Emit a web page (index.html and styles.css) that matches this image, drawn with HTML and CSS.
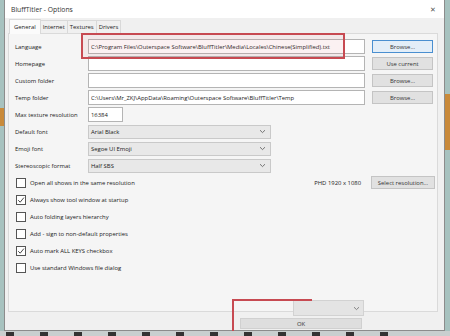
FILE: index.html
```html
<!DOCTYPE html>
<html lang="en">
<head>
    <meta charset="UTF-8">
    <title>BluffTitler - Options</title>
    <link rel="stylesheet" href="styles.css">
</head>
<body>
    <div class="wall wall-left"></div>
    <div class="wall wall-right"></div>

    <div class="window">
        <div class="titlebar">
            <span class="title">BluffTitler - Options</span>
            <span class="close">&#x2715;</span>
        </div>

        <div class="tabs">
            <span class="tab active">General</span>
            <span class="tab">Internet</span>
            <span class="tab">Textures</span>
            <span class="tab">Drivers</span>
        </div>

        <div class="panel">
            <!-- Paths -->
            <div class="row">
                <label>Language</label>
                <input class="field" type="text" value="C:\Program Files\Outerspace Software\BluffTitler\Media\Locales\Chinese(Simplified).txt">
                <button class="btn focused">Browse...</button>
            </div>
            <div class="row">
                <label>Homepage</label>
                <input class="field" type="text" value="">
                <button class="btn">Use current</button>
            </div>
            <div class="row">
                <label>Custom folder</label>
                <input class="field" type="text" value="">
                <button class="btn">Browse...</button>
            </div>
            <div class="row">
                <label>Temp folder</label>
                <input class="field" type="text" value="C:\Users\Mr_ZKJ\AppData\Roaming\Outerspace Software\BluffTitler\Temp">
                <button class="btn">Browse...</button>
            </div>
            <div class="row">
                <label>Max texture resolution</label>
                <input class="field small" type="text" value="16384">
            </div>

            <!-- Dropdowns -->
            <div class="row">
                <label>Default font</label>
                <div class="select"><span>Arial Black</span><svg width="7" height="5" viewBox="0 0 7 5"><path d="M1 1.2 L3.5 3.6 L6 1.2" fill="none" stroke="#666" stroke-width="0.9"/></svg></div>
            </div>
            <div class="row">
                <label>Emoji font</label>
                <div class="select"><span>Segoe UI Emoji</span><svg width="7" height="5" viewBox="0 0 7 5"><path d="M1 1.2 L3.5 3.6 L6 1.2" fill="none" stroke="#666" stroke-width="0.9"/></svg></div>
            </div>
            <div class="row">
                <label>Stereoscopic format</label>
                <div class="select"><span>Half SBS</span><svg width="7" height="5" viewBox="0 0 7 5"><path d="M1 1.2 L3.5 3.6 L6 1.2" fill="none" stroke="#666" stroke-width="0.9"/></svg></div>
            </div>

            <!-- Checkboxes -->
            <div class="check-row">
                <span class="box"></span>
                <span class="check-text">Open all shows in the same resolution</span>
                <span class="res">PHD 1920 x 1080</span>
                <button class="btn res-btn">Select resolution...</button>
            </div>
            <div class="check-row">
                <span class="box"><svg width="8" height="8" viewBox="0 0 8 8"><path d="M1.2 4.2 L3.2 6.2 L6.9 1.6" fill="none" stroke="#333" stroke-width="0.9"/></svg></span>
                <span class="check-text">Always show tool window at startup</span>
            </div>
            <div class="check-row">
                <span class="box"></span>
                <span class="check-text">Auto folding layers hierarchy</span>
            </div>
            <div class="check-row">
                <span class="box"></span>
                <span class="check-text">Add - sign to non-default properties</span>
            </div>
            <div class="check-row">
                <span class="box"><svg width="8" height="8" viewBox="0 0 8 8"><path d="M1.2 4.2 L3.2 6.2 L6.9 1.6" fill="none" stroke="#333" stroke-width="0.9"/></svg></span>
                <span class="check-text">Auto mark ALL KEYS checkbox</span>
            </div>
            <div class="check-row">
                <span class="box"></span>
                <span class="check-text">Use standard Windows file dialog</span>
            </div>
        </div>

        <div class="footer">
            <button class="btn ok">OK</button>
        </div>

        <div class="combo-piece"><svg width="7" height="5" viewBox="0 0 7 5"><path d="M1 1.2 L3.5 3.6 L6 1.2" fill="none" stroke="#777" stroke-width="0.9"/></svg></div>
    </div>

    <!-- red annotation boxes -->
    <div class="mark mark-top"></div>
    <div class="mark mark-bottom"></div>

    <div class="taskbar">
        <span></span><span></span><span></span><span></span><span></span><span></span><span></span><span></span><span></span><span></span><span></span><span></span>
    </div>
</body>
</html>
```

FILE: styles.css
```css
body {
    margin: 0;
    width: 450px;
    height: 336px;
    overflow: hidden;
    position: relative;
    background-color: #a7c2bf;
    font-family: 'Open Sans', 'Noto Sans', sans-serif;
    font-size: 5.9px;
    color: #1a1a1a;
}

.wall {
    position: absolute;
    background-color: #c98a3a;
}

.wall-left {
    left: 0;
    top: 108px;
    width: 4px;
    height: 18px;
}

.wall-right {
    right: 0;
    top: 94px;
    width: 5px;
    height: 56px;
}

.window {
    position: relative;
    margin-left: 4px;
    width: 439px;
    height: 330px;
    background-color: #f0f0f0;
    border: 1px solid #8c8c8c;
    border-top: none;
}

.titlebar {
    height: 18px;
    background-color: #fff;
    display: flex;
    align-items: center;
    justify-content: space-between;
    padding: 0 6px 0 6px;
}

.title {
    font-size: 6.8px;
    color: #333;
    margin-top: 1px;
}

.close {
    font-size: 7px;
    color: #555;
    margin-right: 2px;
}

.tabs {
    display: flex;
    margin: 1px 0 0 4px;
    height: 14px;
    align-items: flex-end;
    font-size: 5.9px;
}

.tab {
    height: 12px;
    line-height: 12px;
    padding: 0 2px;
    border: 1px solid #d9d9d9;
    border-bottom: none;
    background-color: #f0f0f0;
    margin-right: -1px;
}

.tab.active {
    height: 14px;
    line-height: 14px;
    background-color: #fbfbfb;
    position: relative;
    z-index: 1;
    margin-bottom: -1px;
    padding: 0 4px;
}

.panel {
    margin-left: 3px;
    width: 422px;
    height: 272px;
    border: 1px solid #dadada;
    background-color: #f5f5f5;
    padding: 5px 0 0 6px;
    display: flex;
    flex-direction: column;
    gap: 2px;
}

.row {
    display: grid;
    grid-template-columns: 66px 277px 61px;
    column-gap: 7px;
    height: 15px;
    align-items: center;
}

.row label {
    white-space: nowrap;
}

.field {
    font: inherit;
    color: #1a1a1a;
    box-sizing: border-box;
    height: 15px;
    width: 277px;
    padding: 0 2px;
    margin: 0;
    border: 1px solid #b4b4b4;
    background-color: #fff;
    outline: none;
}

.field.small {
    width: 35px;
}

.btn {
    font: inherit;
    color: #333;
    box-sizing: border-box;
    height: 13px;
    margin: 0;
    padding: 0;
    border: 1px solid #c4c4c4;
    background-color: #e1e1e1;
}

.btn.focused {
    border-color: #4a8fd0;
    background-color: #e3eef8;
}

.select {
    box-sizing: border-box;
    width: 183px;
    height: 14px;
    border: 1px solid #c9c9c9;
    background-color: #e8e8e8;
    display: flex;
    align-items: center;
    justify-content: space-between;
    padding: 0 4px 0 2px;
}

.check-row {
    height: 15px;
    display: flex;
    align-items: center;
    padding-left: 1px;
}

.box {
    box-sizing: border-box;
    width: 10px;
    height: 10px;
    border: 1px solid #555;
    background-color: #fff;
    margin-right: 4px;
    display: flex;
    align-items: center;
    justify-content: center;
}

.check-text {
    white-space: nowrap;
}

.res {
    margin-left: auto;
    margin-right: 10px;
}

.res-btn {
    width: 64px;
    margin-right: 2px;
}

.footer {
    display: flex;
    padding: 6px 0 0 235px;
}

.btn.ok {
    width: 122px;
    height: 11px;
    background-color: #dedede;
    border-color: #d0d0d0;
}

.combo-piece {
    position: absolute;
    left: 288px;
    top: 300px;
    box-sizing: border-box;
    width: 71px;
    height: 16px;
    background-color: #e4e4e4;
    border: 1px solid #d2d2d2;
    display: flex;
    align-items: center;
    justify-content: flex-end;
    padding-right: 3px;
}

.mark {
    position: absolute;
    border: 2px solid #c74a52;
    box-sizing: border-box;
}

.mark-top {
    left: 81px;
    top: 33px;
    width: 264px;
    height: 26px;
    background-color: rgba(220, 120, 130, 0.1);
}

.mark-bottom {
    left: 232px;
    top: 299px;
    width: 80px;
    height: 35px;
    border-right: none;
    z-index: 0;
}

.taskbar {
    position: absolute;
    left: 0;
    bottom: 0;
    width: 450px;
    height: 5px;
    background-color: #c9cfcf;
    display: flex;
    gap: 26px;
    padding-left: 6px;
}

.taskbar span {
    width: 8px;
    height: 4px;
    background-color: #333;
    margin-top: 1px;
}
```
